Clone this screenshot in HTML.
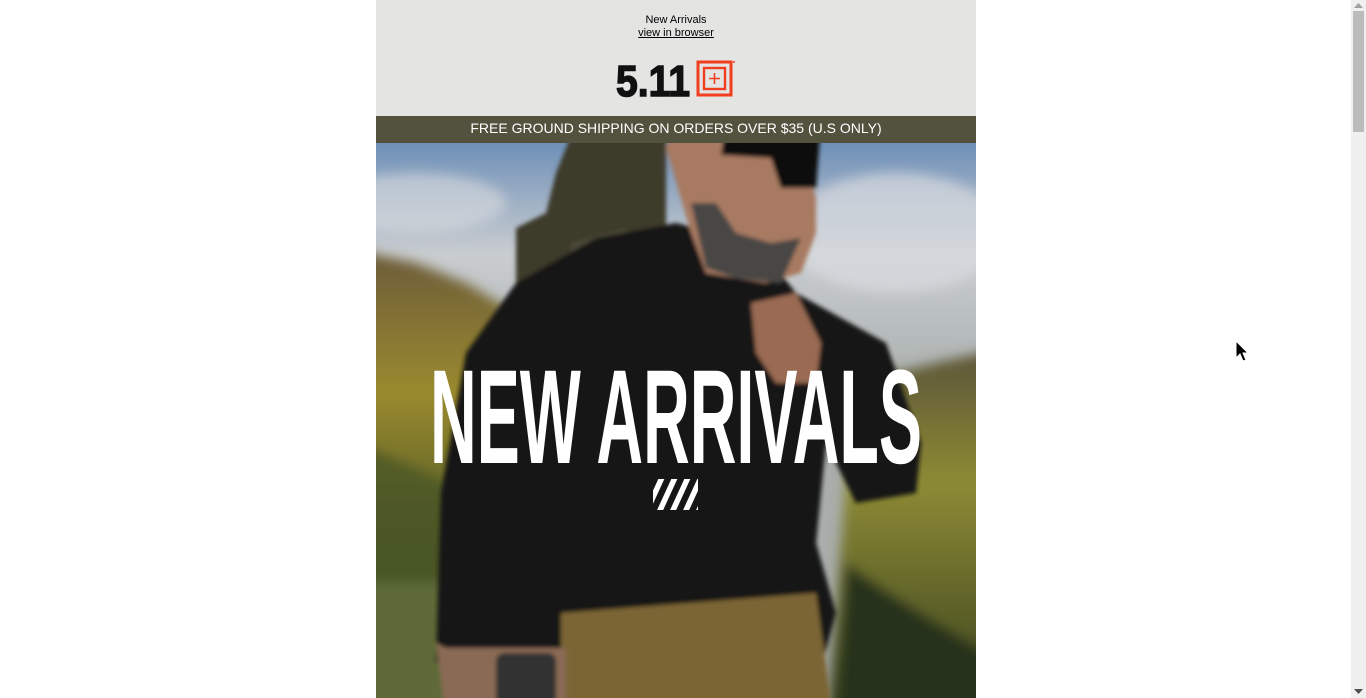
<!DOCTYPE html>
<html><head><meta charset="utf-8"><style>
html,body{margin:0;padding:0;background:#fff;overflow:hidden;width:1366px;height:698px;font-family:"Liberation Sans",sans-serif}
#wrap{position:absolute;left:376px;top:0;width:600px;height:698px;overflow:hidden}
#hdr{background:#e4e4e3;height:116px;text-align:center;position:relative}
#t1{position:absolute;top:14px;left:0;width:600px;font-size:11px;color:#000;line-height:13px}
#t2{position:absolute;top:27px;left:0;width:600px;font-size:11px;line-height:13px}
#t2 a{color:#000;text-decoration:underline}
#bar{background:#52523f;height:27px;color:#fff;font-size:14px;line-height:25px;text-align:center;overflow:hidden}
#sb{position:absolute;left:1351px;top:0;width:15px;height:698px;background:#f0f0f0}
#th{position:absolute;left:2px;top:11px;width:11px;height:121px;background:#bcbcbc}
</style></head><body>
<div id="wrap">
<div id="hdr">
<div id="t1">New Arrivals</div>
<div id="t2"><a>view in browser</a></div>
<svg style="position:absolute;left:240px;top:60px" width="122" height="38" viewBox="0 0 122 38">
<text x="0" y="36" font-family="Liberation Sans" font-weight="bold" font-size="44" fill="#111" stroke="#111" stroke-width="1.5" textLength="74" lengthAdjust="spacingAndGlyphs">5.11</text>
<rect x="82" y="2" width="33" height="33" fill="none" stroke="#f03e1e" stroke-width="3"/>
<rect x="88" y="8" width="21" height="21" fill="none" stroke="#f03e1e" stroke-width="2.4"/>
<path d="M98.5 13v11M93 18.5h11" stroke="#f03e1e" stroke-width="1.6"/>
<circle cx="118" cy="2" r="1" fill="#f03e1e"/>
</svg>
</div>
<div id="bar">FREE GROUND SHIPPING ON ORDERS OVER $35 (U.S ONLY)</div>
<svg width="600" height="555" viewBox="0 0 600 555" style="display:block;overflow:hidden">
<defs>
<linearGradient id="sky" x1="0" y1="0" x2="0" y2="1"><stop offset="0" stop-color="#6f90b8"/><stop offset=".2" stop-color="#c9cdd0"/><stop offset=".45" stop-color="#a9aeac"/></linearGradient>
<linearGradient id="mt" x1="0" y1="0" x2="0" y2="1"><stop offset="0" stop-color="#6a5a3a"/><stop offset=".3" stop-color="#9a8a2e"/><stop offset=".6" stop-color="#4f5a28"/><stop offset="1" stop-color="#3a4220"/></linearGradient>
<linearGradient id="mt2" x1="0" y1="0" x2="0" y2="1"><stop offset="0" stop-color="#5b5438"/><stop offset=".35" stop-color="#8d8a35"/><stop offset="1" stop-color="#2f3a1c"/></linearGradient>
<filter id="bl" filterUnits="userSpaceOnUse" x="-50" y="-50" width="700" height="660"><feGaussianBlur stdDeviation="6"/></filter>
<filter id="bl2" filterUnits="userSpaceOnUse" x="-50" y="-50" width="700" height="660"><feGaussianBlur stdDeviation="2"/></filter>
</defs>
<rect width="600" height="555" fill="url(#sky)"/>
<g filter="url(#bl)">
<ellipse cx="520" cy="90" rx="110" ry="60" fill="#d8dcdf" opacity=".7"/>
<ellipse cx="40" cy="60" rx="90" ry="30" fill="#d8dcdf" opacity=".6"/>
<path d="M-30 105 L40 120 L90 140 L140 170 L150 590 L-30 590Z" fill="url(#mt)"/>
<path d="M480 210 L520 230 L560 220 L630 205 L630 590 L450 590Z" fill="url(#mt2)"/>
<path d="M-30 295 Q60 330 150 380 L150 590 L-30 590Z" fill="#4a5626" opacity=".8"/>
<path d="M470 420 Q540 470 630 520 L630 590 L460 590Z" fill="#26301a"/>
<rect x="-30" y="440" width="190" height="150" fill="#6e7a48" opacity=".6"/>
</g>
<g filter="url(#bl2)">
<path d="M140 85 L170 70 L180 30 L200 -20 L290 -20 L290 120 L260 200 L250 380 L200 380 L190 230 L140 150Z" fill="#3c3b2c"/>
<path d="M195 100 L250 85 L260 120 L250 380 L200 380 L190 200Z" fill="#4b4a37"/>
<path d="M60 520 L65 350 L90 210 L140 140 L220 95 L300 80 L380 100 L420 150 L510 200 L545 300 L540 350 L480 360 L450 300 L440 400 L460 470 L430 580 L190 580 L190 510 Z" fill="#121212"/>
<path d="M185 470 L440 450 L458 580 L185 580Z" fill="#7b6535"/>
<path d="M60 500 L70 505 L190 505 L190 580 L70 580Z" fill="#8a6a55"/>
<rect x="120" y="510" width="60" height="60" rx="8" fill="#333"/>
<path d="M290 5 L300 -20 L420 -20 L440 55 L440 90 L425 130 L390 140 L330 130 L315 90 Z" fill="#a87a62"/>
<path d="M315 60 L330 125 L360 135 L405 140 L425 95 L395 100 L360 90 L340 60Z" fill="#4a4744"/>
<path d="M350 -20 L445 -20 L440 45 L405 45 L395 15 L345 12Z" fill="#111"/>
<path d="M375 160 L420 150 L445 200 L440 240 L400 240 L380 210Z" fill="#9a6a52"/>
</g>
<text x="54" y="320" font-family="Liberation Sans Narrow,Liberation Sans" font-weight="bold" font-size="134" fill="#fff" textLength="492" lengthAdjust="spacingAndGlyphs">NEW ARRIVALS</text>
<g transform="translate(277,336)"><clipPath id="c"><rect width="45" height="31"/></clipPath>
<g clip-path="url(#c)" stroke="#fff" stroke-width="5.5"><path d="M-10 40 L12 -8 M3 40 L25 -8 M16 40 L38 -8 M29 40 L51 -8 M42 40 L64 -8"/></g></g>
</svg>
</div>
<div id="sb"><div id="th"></div>
<svg style="position:absolute;left:3px;top:3px" width="9" height="5"><path d="M0 5L4.5 0L9 5Z" fill="#a0a0a0"/></svg>
<svg style="position:absolute;left:3px;top:689px" width="9" height="5"><path d="M0 0L4.5 5L9 0Z" fill="#505050"/></svg>
</div>
<svg style="position:absolute;left:1235px;top:340px" width="16" height="24"><path d="M1 1L1 18L5 14L8 21L11 20L8 13L13 13Z" fill="#000" stroke="#fff" stroke-width="1"/></svg>
</body></html>
